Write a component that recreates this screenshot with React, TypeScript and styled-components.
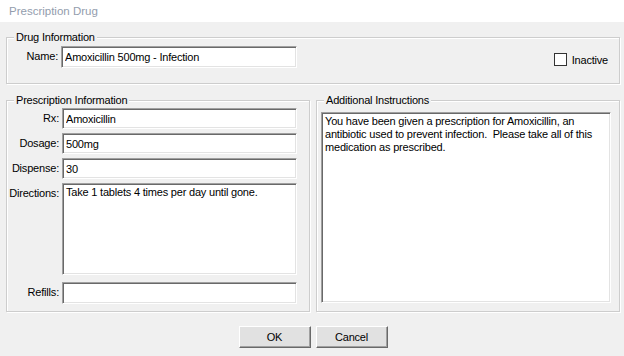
import React from 'react';
import styled, { createGlobalStyle } from 'styled-components';

const GlobalStyle = createGlobalStyle`
  html, body {
    margin: 0;
    padding: 0;
    background: #f0f0f0;
  }
  body {
    font-family: "Liberation Sans", Arial, sans-serif;
    font-size: 11px;
    letter-spacing: -0.2px;
    color: #000;
  }
`;

const Window = styled.div`
  width: 624px;
  height: 356px;
  background: #f0f0f0;
  display: flex;
  flex-direction: column;
`;

const TitleBar = styled.div`
  height: 22px;
  background: #fff;
  display: flex;
  align-items: center;
  padding-left: 9px;
  font-size: 11.5px;
  letter-spacing: 0;
  color: #939dad;
`;

const Body = styled.div`
  padding: 15px 4px 0 6px;
  display: flex;
  flex-direction: column;
`;

const Group = styled.div<{ $height: number }>`
  position: relative;
  box-sizing: border-box;
  height: ${p => p.$height}px;
  border: 1px solid #cdcdcd;
  box-shadow: inset 1px 1px 0 #fff, 1px 1px 0 #fff;
`;

const Legend = styled.span`
  position: absolute;
  top: -7px;
  left: 7px;
  padding: 0 2px;
  line-height: 13px;
  background: #f0f0f0;
`;

const DrugGroup = styled(Group)`
  display: flex;
  justify-content: space-between;
  align-items: flex-start;
  padding: 8px 11px 0 0;
`;

const Row = styled.div<{ $gap?: number }>`
  display: flex;
  align-items: flex-start;
  margin-top: ${p => p.$gap ?? 0}px;
`;

const Label = styled.label<{ $width: number }>`
  width: ${p => p.$width}px;
  flex: none;
  text-align: right;
  padding: 4px 3px 0 0;
  box-sizing: border-box;
  line-height: 13px;
`;

const sunken = `
  box-sizing: border-box;
  border-style: solid;
  border-width: 1px;
  border-color: #a0a0a0 #fff #fff #a0a0a0;
  box-shadow: inset 1px 1px 0 #696969, inset -1px -1px 0 #e3e3e3;
  background: #fff;
  font-family: "Liberation Sans", Arial, sans-serif;
  font-size: 11px;
  letter-spacing: -0.2px;
  color: #000;
  outline: none;
  margin: 0;
`;

const TextInput = styled.input<{ $width: number; $height?: number }>`
  ${sunken}
  width: ${p => p.$width}px;
  height: ${p => p.$height ?? 21}px;
  padding: 0 3px;
`;

const TextArea = styled.textarea<{ $width: number; $height: number }>`
  ${sunken}
  width: ${p => p.$width}px;
  height: ${p => p.$height}px;
  padding: 2px 3px;
  resize: none;
  overflow: hidden;
  line-height: 13px;
`;

const CheckWrap = styled.label`
  display: flex;
  align-items: center;
  gap: 5px;
  margin-top: 7px;
`;

const CheckBox = styled.span`
  width: 13px;
  height: 13px;
  box-sizing: border-box;
  border: 1px solid #333;
  background: #fff;
`;

const Columns = styled.div`
  display: flex;
  gap: 6px;
  margin-top: 16px;
`;

const RxGroup = styled(Group)`
  width: 304px;
  padding: 7px 0 0 0;
`;

const NotesGroup = styled(Group)`
  width: 304px;
  padding: 11px 0 0 4px;
`;

const Buttons = styled.div`
  display: flex;
  justify-content: center;
  gap: 5px;
  margin-top: 14px;
`;

const Button = styled.button`
  width: 72px;
  height: 22px;
  box-sizing: border-box;
  background: #e1e1e1;
  border-style: solid;
  border-width: 1px;
  border-color: #fff #696969 #696969 #fff;
  box-shadow: inset -1px -1px 0 #a0a0a0;
  font-family: "Liberation Sans", Arial, sans-serif;
  font-size: 11px;
  letter-spacing: -0.2px;
  color: #000;
  padding: 0;
`;

const notes =
  'You have been given a prescription for Amoxicillin, an\nantibiotic used to prevent infection.  Please take all of this\nmedication as prescribed.';

export default function App() {
  return (
    <Window>
      <GlobalStyle />
      <TitleBar>Prescription Drug</TitleBar>
      <Body>
        <DrugGroup $height={47}>
          <Legend>Drug Information</Legend>
          <Row>
            <Label $width={54}>Name:</Label>
            <TextInput $width={236} $height={22} defaultValue="Amoxicillin 500mg - Infection" />
          </Row>
          <CheckWrap>
            <CheckBox />
            Inactive
          </CheckWrap>
        </DrugGroup>
        <Columns>
          <RxGroup $height={212}>
            <Legend>Prescription Information</Legend>
            <Row>
              <Label $width={55}>Rx:</Label>
              <TextInput $width={235} defaultValue="Amoxicillin" />
            </Row>
            <Row $gap={4}>
              <Label $width={55}>Dosage:</Label>
              <TextInput $width={235} defaultValue="500mg" />
            </Row>
            <Row $gap={4}>
              <Label $width={55}>Dispense:</Label>
              <TextInput $width={235} defaultValue="30" />
            </Row>
            <Row $gap={4}>
              <Label $width={55}>Directions:</Label>
              <TextArea $width={235} $height={92} defaultValue="Take 1 tablets 4 times per day until gone." />
            </Row>
            <Row $gap={7}>
              <Label $width={55}>Refills:</Label>
              <TextInput $width={235} $height={22} defaultValue="" />
            </Row>
          </RxGroup>
          <NotesGroup $height={212}>
            <Legend>Additional Instructions</Legend>
            <TextArea $width={290} $height={191} defaultValue={notes} />
          </NotesGroup>
        </Columns>
        <Buttons>
          <Button>OK</Button>
          <Button>Cancel</Button>
        </Buttons>
      </Body>
    </Window>
  );
}
